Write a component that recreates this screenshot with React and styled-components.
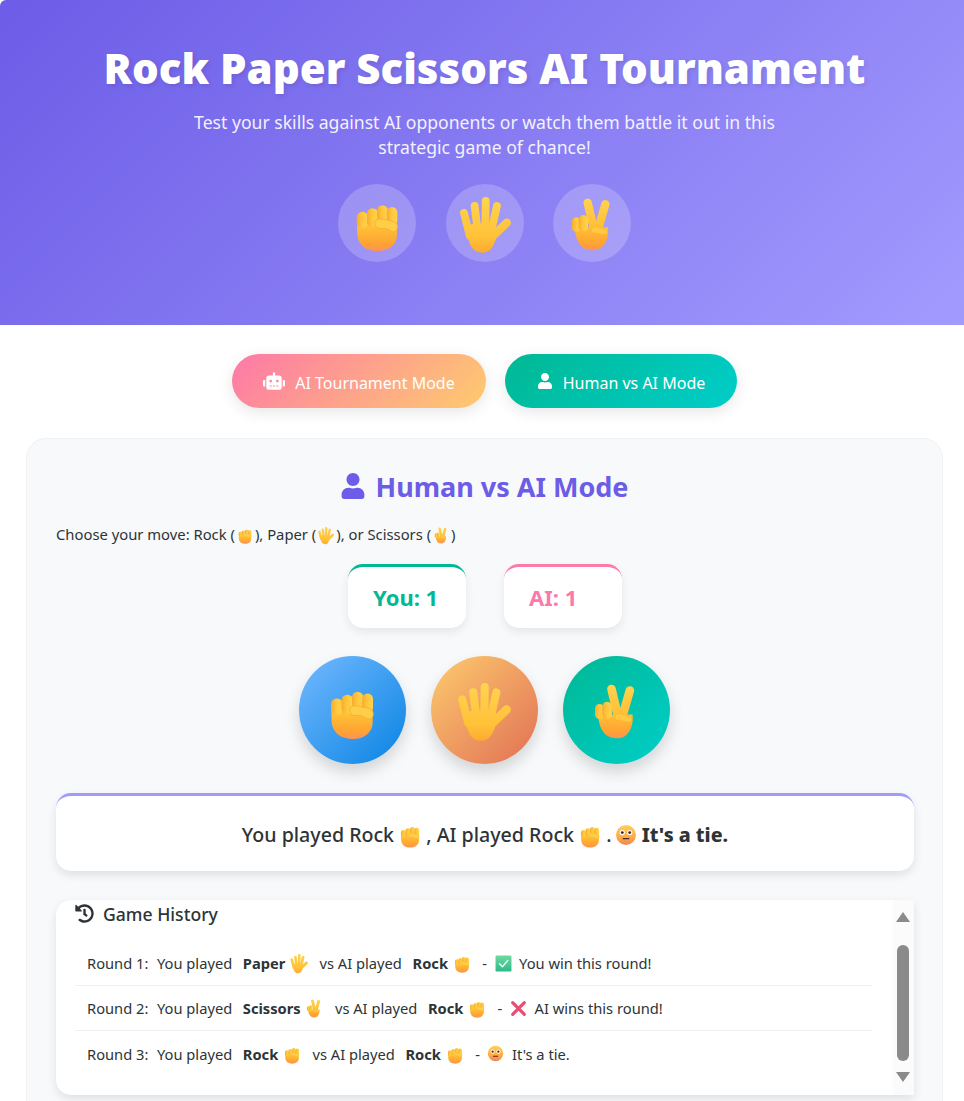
import styled, { createGlobalStyle } from 'styled-components';
import { FaRobot, FaUser, FaHistory } from 'react-icons/fa';

const GlobalStyle = createGlobalStyle`
  html, body {
    margin: 0;
    height: 1101px;
    overflow: hidden;
    background: #fff;
  }
  body {
    font-family: "Noto Sans", "Open Sans", sans-serif;
    color: #2d3436;
  }
  * {
    box-sizing: border-box;
  }
`;

function EmojiDefs() {
  return (
    <HiddenSvg aria-hidden="true">
      <defs>
        <linearGradient id="skin" gradientUnits="userSpaceOnUse" x1="0" y1="3" x2="0" y2="32">
          <stop offset="0" stopColor="#ffd34f" />
          <stop offset="0.55" stopColor="#ffbe35" />
          <stop offset="0.85" stopColor="#ffa233" />
          <stop offset="1" stopColor="#fb8f62" />
        </linearGradient>
        <linearGradient id="handskin" gradientUnits="userSpaceOnUse" x1="0" y1="3" x2="0" y2="33">
          <stop offset="0" stopColor="#ffd34f" />
          <stop offset="0.7" stopColor="#ffc138" />
          <stop offset="1" stopColor="#fda92f" />
        </linearGradient>
        <linearGradient id="finger" x1="0" y1="0" x2="1" y2="0">
          <stop offset="0" stopColor="#f7ab2c" />
          <stop offset="0.45" stopColor="#ffc63c" />
          <stop offset="1" stopColor="#ffd44f" />
        </linearGradient>
        <linearGradient id="face" x1="0" y1="0" x2="0" y2="1">
          <stop offset="0" stopColor="#ffd05c" />
          <stop offset="0.65" stopColor="#ffa83f" />
          <stop offset="1" stopColor="#f5806a" />
        </linearGradient>
        <linearGradient id="green" x1="0" y1="0" x2="0" y2="1">
          <stop offset="0" stopColor="#6fd9a0" />
          <stop offset="1" stopColor="#2fb98a" />
        </linearGradient>
      </defs>
    </HiddenSvg>
  );
}

function Fist() {
  return (
    <>
      <path d="M5 14C5 11 27 11 27 14V22.5C27 28 22.5 31.5 16.5 31.5C10 31.5 5.4 28 5.1 22Z" fill="url(#skin)" />
      <g fill="url(#finger)">
        <rect x="4.8" y="9.8" width="6.2" height="9" rx="3" />
        <rect x="10.4" y="7.8" width="6.2" height="10.5" rx="3" />
        <rect x="16" y="6.2" width="6" height="9.5" rx="3" />
        <rect x="21.4" y="7.2" width="5.8" height="10" rx="2.9" />
      </g>
      <path d="M14.8 16.4C14.6 14 17 13.4 19.2 13.8L24.6 15C27 15.6 27.8 17.4 27.2 19.2C26.6 21 25 21.2 23.6 20.4C22 19.4 20.6 18.8 18.4 19C16.4 19.1 15 18.4 14.8 16.4Z" fill="#ffce48" stroke="#f3a42b" strokeWidth="0.35" />
    </>
  );
}

function Hand() {
  return (
    <>
      <g stroke="url(#handskin)" strokeWidth="4.3" strokeLinecap="round" fill="none">
        <path d="M4.4 10.4L7.6 23" />
        <path d="M10.3 6.6L11.8 19" />
        <path d="M16.4 3.8L16.2 18" />
        <path d="M22.6 6.6L19.8 19" />
      </g>
      <path d="M28 15.8L19.5 24" stroke="url(#handskin)" strokeWidth="4.6" strokeLinecap="round" fill="none" />
      <path d="M6.2 17.5C9 15.8 19 15.8 21.6 17.5C23.6 22 21.8 27 19.4 30C17.2 33 12 33.2 9.4 30.4C7.2 27.8 6 23 6.2 17.5Z" fill="url(#handskin)" />
    </>
  );
}

function Victory() {
  return (
    <>
      <g stroke="url(#skin)" strokeWidth="4.6" strokeLinecap="round" fill="none">
        <path d="M13.6 4.8L16.7 18" />
        <path d="M23.4 5.6L19.8 18" />
      </g>
      <path d="M6.6 18.4H24.8C25.4 23 24 27 21.4 29.4C18.6 31.8 13.6 31.6 10.6 29.2C8 27 6.6 23 6.6 18.4Z" fill="url(#skin)" />
      <g fill="url(#finger)">
        <rect x="4.8" y="12.8" width="4.8" height="8" rx="2.4" />
        <rect x="8.6" y="11.6" width="5.2" height="9" rx="2.6" />
      </g>
      <path d="M15.6 19.6C16 18 17.6 17.6 19 18.2L23 19.4C24.8 20 25 22 23.4 22.4C21.4 22.8 20 21.6 18 21.6C16.4 21.6 15.4 21 15.6 19.6Z" fill="#ffc940" stroke="#f6ad2f" strokeWidth="0.25" />
    </>
  );
}

function Face() {
  return (
    <>
      <circle cx="16" cy="16" r="14.5" fill="url(#face)" />
      <circle cx="10.6" cy="12.5" r="3.8" fill="#fff" />
      <circle cx="21.4" cy="12.5" r="3.8" fill="#fff" />
      <circle cx="10.6" cy="12.5" r="2.1" fill="#3d2a20" />
      <circle cx="21.4" cy="12.5" r="2.1" fill="#3d2a20" />
      <rect x="11" y="20.4" width="10" height="1.9" rx="0.9" fill="#4a2c20" />
    </>
  );
}

function Check() {
  return (
    <>
      <rect x="1" y="1" width="30" height="30" rx="2.5" fill="url(#green)" />
      <path d="M8.5 16.5L14 22L24 10.5" fill="none" stroke="#eafff3" strokeWidth="2.6" strokeLinecap="round" strokeLinejoin="round" />
    </>
  );
}

function Cross() {
  return (
    <g stroke="#ea4c72" strokeWidth="6" strokeLinecap="round">
      <path d="M5 5L27 27" />
      <path d="M27 5L5 27" />
    </g>
  );
}

const drawings = { fist: Fist, hand: Hand, victory: Victory, face: Face, check: Check, cross: Cross };

function Emoji({ kind, size, className }) {
  const Drawing = drawings[kind];
  return (
    <EmojiSvg className={className} $size={size} viewBox="0 0 32 32" aria-hidden="true">
      <Drawing />
    </EmojiSvg>
  );
}

const rounds = [
  { label: 'Round 1:', you: 'Paper', yourEmoji: 'hand', verdict: 'check', text: 'You win this round!' },
  { label: 'Round 2:', you: 'Scissors', yourEmoji: 'victory', verdict: 'cross', text: 'AI wins this round!' },
  { label: 'Round 3:', you: 'Rock', yourEmoji: 'fist', verdict: 'face', text: "It's a tie." },
];

export default function App() {
  return (
    <Page>
      <GlobalStyle />
      <EmojiDefs />
      <Header>
        <Title>Rock Paper Scissors AI Tournament</Title>
        <Subtitle>Test your skills against AI opponents or watch them battle it out in this strategic game of chance!</Subtitle>
        <HeaderIcons>
          <HeaderIcon><Emoji kind="fist" size={58} /></HeaderIcon>
          <HeaderIcon><Emoji kind="hand" size={58} /></HeaderIcon>
          <HeaderIcon><Emoji kind="victory" size={58} /></HeaderIcon>
        </HeaderIcons>
      </Header>

      <ModeBar>
        <ModeButton $from="#fd79a8" $to="#fdcb6e" $width={254}><FaRobot size={22} /><ModeLabel>AI Tournament Mode</ModeLabel></ModeButton>
        <ModeButton $from="#00b894" $to="#00cec9" $width={232}><FaUser size={16} /><ModeLabel>Human vs AI Mode</ModeLabel></ModeButton>
      </ModeBar>

      <Panel>
        <PanelTitle><FaUser size={26} />Human vs AI Mode</PanelTitle>
        <Hint>
          Choose your move: Rock (<HintEmoji kind="fist" size={18} />), Paper (<HintEmoji kind="hand" size={18} />), or Scissors (<HintEmoji kind="victory" size={18} />)
        </Hint>

        <Scores>
          <Score $color="#00b894">You: 1</Score>
          <Score $color="#fd79a8">AI: 1</Score>
        </Scores>

        <Moves>
          <Move $from="#74b9ff" $to="#0984e3"><Emoji kind="fist" size={60} /></Move>
          <Move $from="#fdcb6e" $to="#e17055"><Emoji kind="hand" size={60} /></Move>
          <Move $from="#00b894" $to="#00cec9"><Emoji kind="victory" size={60} /></Move>
        </Moves>

        <Result>
          You played Rock <ResultEmoji kind="fist" size={26} /> , AI played Rock <ResultEmoji kind="fist" size={26} /> .<FaceEmoji kind="face" size={22} /> <strong>It's a tie.</strong>
        </Result>

        <History>
          <HistoryList>
            <HistoryTitle><FaHistory size={19} />Game History</HistoryTitle>
            {rounds.map((round) => (
              <Round key={round.label}>
                <RoundLabel>{round.label}</RoundLabel>
                <span>You played</span>
                <strong>{round.you}</strong>
                <RoundEmoji kind={round.yourEmoji} size={20} />
                <span>vs AI played</span>
                <strong>Rock</strong>
                <RoundEmoji kind="fist" size={20} />
                <span>-</span>
                <Emoji kind={round.verdict} size={17} />
                <span>{round.text}</span>
              </Round>
            ))}
          </HistoryList>
          <Scrollbar>
            <ArrowUp />
            <Thumb />
            <ArrowDown />
          </Scrollbar>
        </History>
      </Panel>
    </Page>
  );
}

const HiddenSvg = styled.svg`
  position: absolute;
  width: 0;
  height: 0;
`;

const EmojiSvg = styled.svg`
  width: ${(props) => props.$size}px;
  height: ${(props) => props.$size}px;
  overflow: visible;
  flex-shrink: 0;
  vertical-align: middle;
`;

const HintEmoji = styled(Emoji)`
  margin: -3px 1px 0;
`;

const ResultEmoji = styled(Emoji)`
  margin: -4px -2px 0;
`;

const FaceEmoji = styled(Emoji)`
  margin: -3px 0 0 3px;
`;

const RoundEmoji = styled(Emoji)`
  margin: 0 3px 0 -4px;
`;

const Page = styled.div`
  height: 1101px;
  overflow: hidden;
`;

const Header = styled.header`
  height: 325px;
  padding: 36px 0 0 5px;
  background: linear-gradient(135deg, #6c5ce7, #a29bfe);
  border-top-left-radius: 6px;
  color: #fff;
  text-align: center;
`;

const Title = styled.h1`
  margin: 0;
  height: 64px;
  font-size: 42px;
  line-height: 64px;
  font-weight: 900;
  text-shadow: 2px 2px 4px rgba(0, 0, 0, 0.1);
`;

const Subtitle = styled.p`
  width: 600px;
  margin: 10px auto 0;
  font-size: 17.6px;
  line-height: 25px;
  opacity: 0.9;
`;

const HeaderIcons = styled.div`
  display: flex;
  justify-content: center;
  gap: 29.5px;
  margin-top: 24px;
`;

const HeaderIcon = styled.div`
  width: 78px;
  height: 78px;
  border-radius: 50%;
  background: rgba(255, 255, 255, 0.2);
  display: flex;
  align-items: center;
  justify-content: center;
`;

const ModeBar = styled.div`
  display: flex;
  justify-content: center;
  gap: 19px;
  padding: 29px 0 0 5px;
`;

const ModeButton = styled.button`
  width: ${(props) => props.$width}px;
  height: 54px;
  display: flex;
  align-items: center;
  justify-content: center;
  gap: 10px;
  border: none;
  border-radius: 50px;
  background: linear-gradient(135deg, ${(props) => props.$from}, ${(props) => props.$to});
  box-shadow: 0 4px 15px rgba(0, 0, 0, 0.1);
  color: #fff;
  font-family: inherit;
  font-size: 16px;
`;

const ModeLabel = styled.span`
  padding-top: 3px;
`;

const Panel = styled.section`
  width: 917px;
  height: 700px;
  margin: 30px 0 0 26px;
  padding: 25px 28px 0 29px;
  background: #f8f9fa;
  border: 1px solid #eff1f3;
  border-radius: 20px;
`;

const PanelTitle = styled.h2`
  margin: 0;
  height: 44px;
  padding-right: 2px;
  display: flex;
  align-items: center;
  justify-content: center;
  gap: 10px;
  color: #6c5ce7;
  font-size: 27px;
  font-weight: 700;
`;

const Hint = styled.p`
  margin: 14px 0 0;
  height: 24px;
  font-size: 14.8px;
  line-height: 24px;
`;

const Scores = styled.div`
  display: flex;
  justify-content: center;
  gap: 38px;
  margin-top: 18px;
`;

const Score = styled.div`
  width: 118px;
  height: 64px;
  padding: 0 0 2px 25px;
  display: flex;
  align-items: center;
  background: #fff;
  border-top: 3px solid ${(props) => props.$color};
  border-radius: 15px;
  box-shadow: 0 4px 10px rgba(0, 0, 0, 0.08);
  color: ${(props) => props.$color};
  font-size: 22px;
  font-weight: 700;
`;

const Moves = styled.div`
  display: flex;
  justify-content: center;
  gap: 25px;
  margin-top: 28px;
  padding-right: 2px;
`;

const Move = styled.button`
  width: 107px;
  height: 108px;
  padding: 0;
  display: flex;
  align-items: center;
  justify-content: center;
  border: none;
  border-radius: 50%;
  background: linear-gradient(135deg, ${(props) => props.$from}, ${(props) => props.$to});
  box-shadow: 0 8px 15px rgba(0, 0, 0, 0.15);
`;

const Result = styled.div`
  height: 78px;
  margin-top: 29px;
  background: #fff;
  border-top: 3px solid #a29bfe;
  border-radius: 15px;
  box-shadow: 0 4px 10px rgba(0, 0, 0, 0.1);
  font-size: 19.6px;
  line-height: 78px;
  font-weight: 500;
  text-align: center;
  white-space: pre;

  strong {
    font-weight: 800;
  }
`;

const History = styled.div`
  height: 195px;
  margin-top: 29px;
  display: flex;
  background: #fff;
  border-radius: 15px 0 0 15px;
  box-shadow: 0 4px 10px rgba(0, 0, 0, 0.1);
  overflow: hidden;
`;

const HistoryList = styled.div`
  flex: 1;
  padding: 0 21px 0 19px;
`;

const HistoryTitle = styled.h3`
  margin: 0 0 14px;
  height: 27px;
  display: flex;
  align-items: center;
  gap: 9px;
  font-size: 17.6px;
  font-weight: 500;
`;

const Round = styled.div`
  height: 45px;
  padding-left: 12px;
  display: flex;
  align-items: center;
  gap: 7.6px;
  border-bottom: 1px solid #f0f0f0;
  font-size: 14.7px;

  &:last-child {
    border-bottom: none;
  }

  strong {
    font-weight: 700;
    margin-left: 3px;
  }
`;

const RoundLabel = styled.span`
  margin-right: 1px;
`;

const Scrollbar = styled.div`
  width: 21px;
  display: flex;
  flex-direction: column;
  align-items: center;
  padding: 12px 2px 0 0;
  background: #fbfbfb;
`;

const ArrowUp = styled.div`
  width: 0;
  height: 0;
  border-left: 7px solid transparent;
  border-right: 7px solid transparent;
  border-bottom: 10px solid #8a8a8a;
`;

const Thumb = styled.div`
  width: 12px;
  height: 116px;
  margin: 23px 0 11px;
  border-radius: 6px;
  background: #8a8a8a;
`;

const ArrowDown = styled.div`
  width: 0;
  height: 0;
  border-left: 7px solid transparent;
  border-right: 7px solid transparent;
  border-top: 10px solid #8a8a8a;
`;
